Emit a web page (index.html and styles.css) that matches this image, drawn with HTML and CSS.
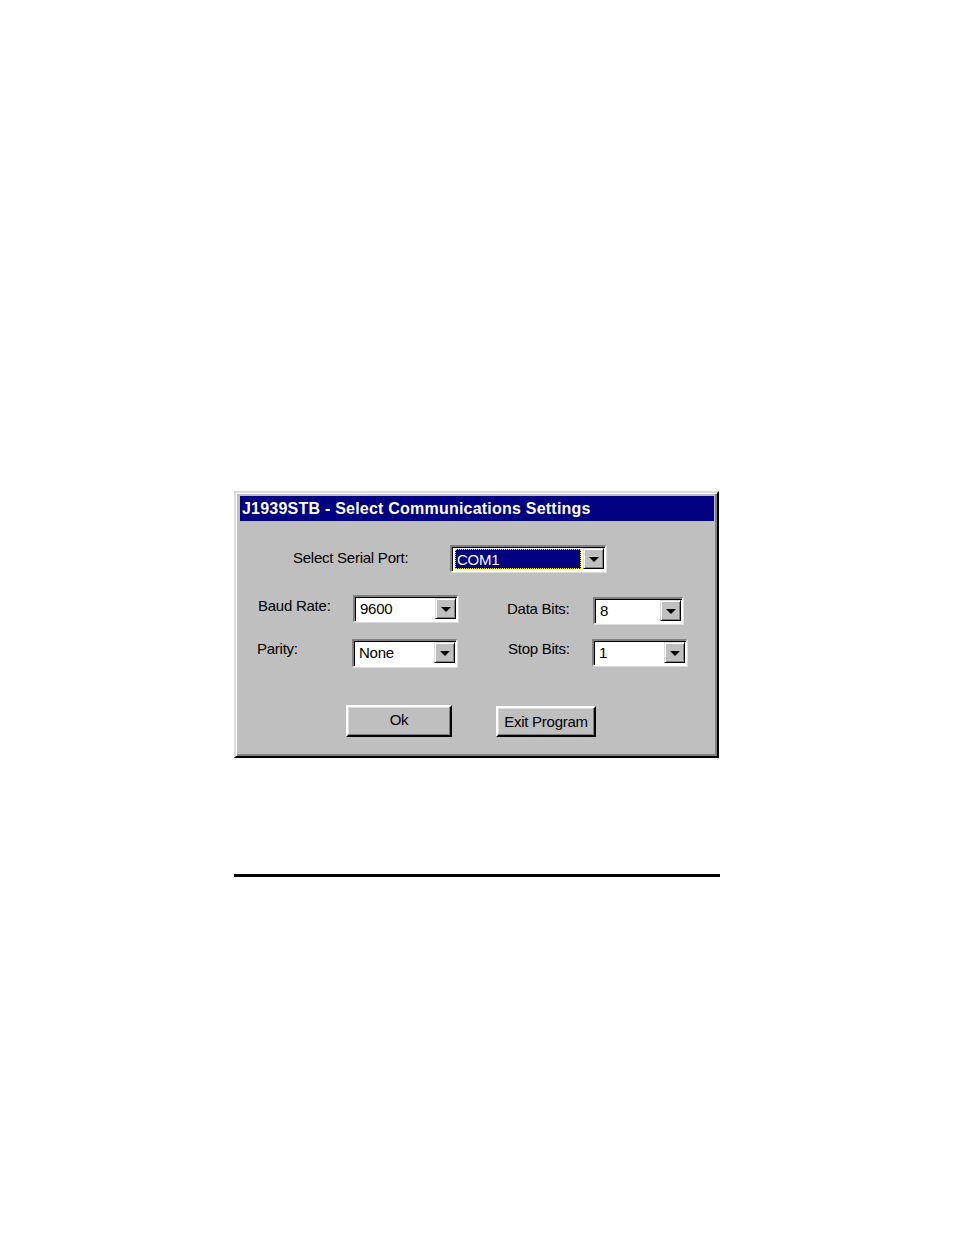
FILE: index.html
```html
<!DOCTYPE html>
<html>
<head>
<meta charset="utf-8">
<link rel="stylesheet" href="styles.css">
</head>
<body>
<div class="page">
  <div class="dialog">
    <div class="titlebar">J1939STB - Select Communications Settings</div>
    <div class="content">
      <div class="row row1">
        <div class="label l-port">Select Serial Port:</div>
        <div class="combo c-port">
          <div class="field selected"><span class="focus">COM1</span></div>
          <div class="arrow"><span class="tri"></span></div>
        </div>
      </div>
      <div class="row row2">
        <div class="label l-baud">Baud Rate:</div>
        <div class="combo c-baud">
          <div class="field">9600</div>
          <div class="arrow"><span class="tri"></span></div>
        </div>
        <div class="label l-data">Data Bits:</div>
        <div class="combo c-data">
          <div class="field">8</div>
          <div class="arrow"><span class="tri"></span></div>
        </div>
      </div>
      <div class="row row3">
        <div class="label l-parity">Parity:</div>
        <div class="combo c-parity">
          <div class="field">None</div>
          <div class="arrow"><span class="tri"></span></div>
        </div>
        <div class="label l-stop">Stop Bits:</div>
        <div class="combo c-stop">
          <div class="field">1</div>
          <div class="arrow"><span class="tri"></span></div>
        </div>
      </div>
      <div class="row row4">
        <div class="button b-ok">Ok</div>
        <div class="button b-exit">Exit Program</div>
      </div>
    </div>
  </div>
  <div class="rule"></div>
</div>
</body>
</html>
```
FILE: styles.css
```css
html, body {
  margin: 0;
  padding: 0;
  background: #ffffff;
}

.page {
  padding-top: 491px;
  padding-left: 234px;
  font-family: "Liberation Sans", Arial, sans-serif;
}

.dialog {
  width: 485px;
  height: 267px;
  box-sizing: border-box;
  background: #bfbfbf;
  border-top: 2px solid #dcdcdc;
  border-left: 2px solid #dcdcdc;
  border-right: 2px solid #000000;
  border-bottom: 2px solid #000000;
  box-shadow: inset 1px 1px 0 #ffffff, inset -2px -2px 0 #808080;
  padding: 3px 3px 0 4px;
}

.titlebar {
  height: 25px;
  line-height: 25px;
  background: #000080;
  color: #ffffff;
  font-weight: bold;
  font-size: 16px;
  padding-left: 2px;
  letter-spacing: 0.22px;
  white-space: nowrap;
}

.content {
  font-size: 15px;
  letter-spacing: -0.25px;
  color: #000000;
}

.row {
  display: flex;
  align-items: flex-start;
}

.row1 {
  margin-top: 24px;
  padding-left: 53px;
}

.row2 {
  margin-top: 23px;
  padding-left: 18px;
}

.row3 {
  margin-top: 15px;
  padding-left: 17px;
}

.row4 {
  margin-top: 38px;
  padding-left: 106px;
}

.label {
  padding-top: 4px;
  white-space: nowrap;
}

.l-port { width: 157px; padding-top: 4px; }
.l-baud { width: 95px; padding-top: 2px; }
.l-data { width: 86px; margin-left: 49px; padding-top: 5px; }
.l-parity { width: 95px; padding-top: 1px; }
.l-stop { width: 84px; margin-left: 51px; padding-top: 1px; }

.combo {
  display: flex;
  height: 27px;
  box-sizing: border-box;
  background: #ffffff;
  border-top: 2px solid #808080;
  border-left: 2px solid #808080;
  border-right: 1px solid #ffffff;
  border-bottom: 1px solid #ffffff;
  box-shadow: inset 1px 1px 0 #000000, 1px 1px 0 #dcdcdc;
  padding: 1px;
}

.c-port { width: 156px; }
.c-baud { width: 105px; }
.c-data { width: 90px; margin-top: 2px; }
.c-parity { width: 105px; height: 28px; }
.c-stop { width: 95px; }

.field {
  flex: 1;
  padding-left: 4px;
  line-height: 22px;
  white-space: nowrap;
  overflow: hidden;
}

.field.selected {
  padding: 1px 2px;
  background: #ffffff;
}

.focus {
  display: block;
  height: 100%;
  box-sizing: border-box;
  background: #000080;
  color: #ffffff;
  border: 1px dotted #e8e000;
  line-height: 19px;
  padding-left: 1px;
}

.arrow {
  width: 21px;
  height: 21px;
  box-sizing: border-box;
  background: #bfbfbf;
  border-top: 1px solid #dcdcdc;
  border-left: 1px solid #dcdcdc;
  border-right: 1px solid #000000;
  border-bottom: 1px solid #000000;
  box-shadow: inset 1px 1px 0 #ffffff, inset -1px -1px 0 #808080;
  display: flex;
  align-items: center;
  justify-content: center;
}

.tri {
  width: 0;
  height: 0;
  border-left: 5px solid transparent;
  border-right: 5px solid transparent;
  border-top: 5px solid #000000;
  margin-top: 1px;
}

.button {
  box-sizing: border-box;
  background: #bfbfbf;
  border-top: 2px solid #ffffff;
  border-left: 2px solid #ffffff;
  border-right: 2px solid #000000;
  border-bottom: 2px solid #000000;
  box-shadow: inset -1px -1px 0 #808080, inset 1px 1px 0 #dcdcdc;
  text-align: center;
  white-space: nowrap;
}

.b-ok {
  width: 106px;
  height: 32px;
  line-height: 26px;
}

.b-exit {
  width: 100px;
  height: 31px;
  line-height: 27px;
  margin-left: 44px;
  margin-top: 1px;
}

.rule {
  width: 486px;
  height: 3px;
  background: #000000;
  margin-top: 116px;
}
```
